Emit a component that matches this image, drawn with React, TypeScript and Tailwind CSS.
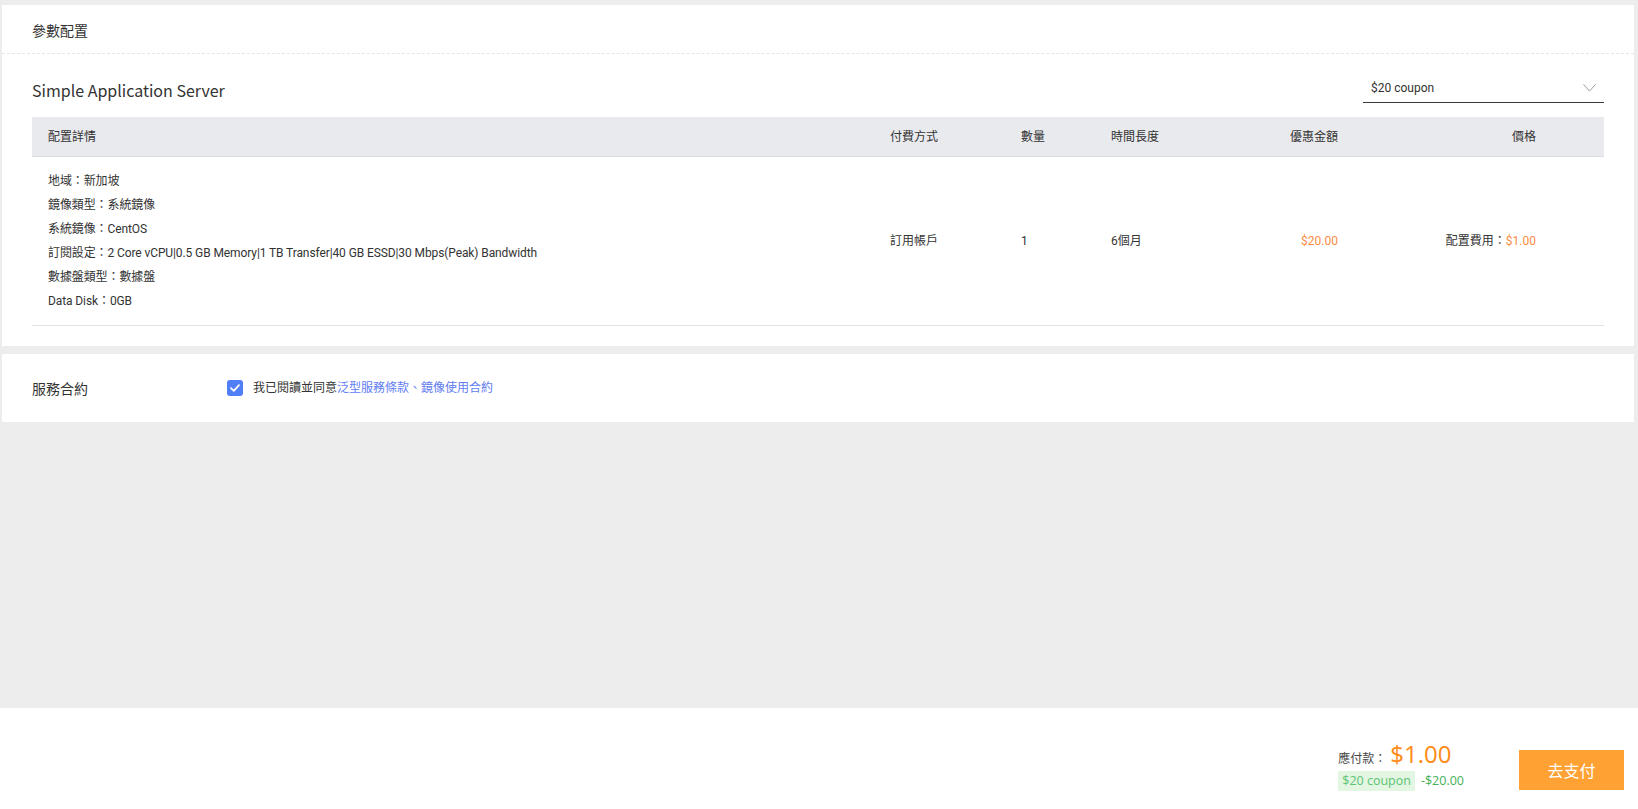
import React from 'react';

const cols = 'grid grid-cols-[858px_131px_90px_227px_198px_1fr]';

const details = [
  '地域：新加坡',
  '鏡像類型：系統鏡像',
  '系統鏡像：CentOS',
  '訂閱設定：2 Core vCPU|0.5 GB Memory|1 TB Transfer|40 GB ESSD|30 Mbps(Peak) Bandwidth',
  '數據盤類型：數據盤',
  'Data Disk：0GB',
];

export default function App() {
  return (
    <div className="h-screen flex flex-col bg-[#ededed] font-['Roboto','Noto_Sans_CJK_TC',sans-serif] text-[#333]">
      <div className="pt-[5px] pl-[2px] pr-[4px]">
        {/* 參數配置 */}
        <div className="bg-white pb-[20px]">
          <div className="h-[49px] pt-[3px] px-[30px] flex items-center border-b border-dashed border-[#e6e6e6] text-[14px] font-['Noto_Sans_CJK_TC',sans-serif]">
            參數配置
          </div>
          <div className="px-[30px]">
            <div className="flex items-center justify-between mt-[20px] mb-[14px] h-[29px]">
              <div className="pt-[3px] text-[16px] font-['Noto_Sans_CJK_TC',sans-serif] text-[#333]">
                Simple Application Server
              </div>
              <div className="w-[241px] h-[29px] flex items-center justify-between pl-[8px] pr-[8px] border-b border-[#3a3a3a] text-[12px]">
                <span>$20 coupon</span>
                <svg width="13" height="8" viewBox="0 0 13 8" fill="none">
                  <path d="M0.5 0.5 L6.5 7 L12.5 0.5" stroke="#999" strokeWidth="1" />
                </svg>
              </div>
            </div>

            <div className={`${cols} h-[40px] items-center bg-[#e9eaee] border-b border-[#dcdde1] text-[12px]`}>
              <div className="pl-4">配置詳情</div>
              <div>付費方式</div>
              <div>數量</div>
              <div className="flex justify-between">
                <span>時間長度</span>
                <span>優惠金額</span>
              </div>
              <div className="text-right">價格</div>
              <div />
            </div>

            <div className={`${cols} items-center py-[12px] border-b border-[#e3e3e6] text-[12px]`}>
              <div className="pl-4 leading-[24px] tracking-[-0.1px]">
                {details.map((d) => (
                  <div key={d}>{d}</div>
                ))}
              </div>
              <div>訂用帳戶</div>
              <div>1</div>
              <div className="flex justify-between">
                <span>6個月</span>
                <span className="text-[#fb8b45]">$20.00</span>
              </div>
              <div className="text-right">
                配置費用：<span className="text-[#fb8b45]">$1.00</span>
              </div>
              <div />
            </div>
          </div>
        </div>

        {/* 服務合約 */}
        <div className="bg-white mt-[8px] h-[68px] px-[30px] flex items-center">
          <div className="w-[195px] text-[14px] font-['Noto_Sans_CJK_TC',sans-serif]">服務合約</div>
          <span className="w-[16px] h-[16px] rounded-[3px] bg-[#4f7ef6] flex items-center justify-center">
            <svg width="10" height="8" viewBox="0 0 10 8" fill="none">
              <path d="M1 4.2 L3.8 6.8 L9 1.2" stroke="white" strokeWidth="1.8" strokeLinecap="round" strokeLinejoin="round" />
            </svg>
          </span>
          <span className="ml-[10px] text-[12px]">
            我已閱讀並同意<span className="text-[#5f7cf3]">泛型服務條款、鏡像使用合約</span>
          </span>
        </div>
      </div>

      <div className="flex-1" />

      {/* footer */}
      <div className="h-[101px] bg-white flex justify-end items-start pt-[29px] pr-[14px] font-['Open_Sans','Noto_Sans_CJK_TC',sans-serif]">
        <div className="flex flex-col">
          <div className="h-[34px] flex items-baseline">
            <span className="text-[12px] text-[#444]">應付款：</span>
            <span className="ml-[4px] text-[24px] leading-[34px] text-[#ff8a14]">$1.00</span>
          </div>
          <div className="flex items-center h-[20px] text-[12.5px]">
            <span className="bg-[#e2f6e2] text-[#5cc474] h-[20px] px-[4px] flex items-center">$20 coupon</span>
            <span className="ml-[6px] text-[#45b05a]">-$20.00</span>
          </div>
        </div>
        <button className="ml-[55px] mt-[13px] w-[105px] h-[40px] bg-[#ffa133] text-white text-[16px] font-['Noto_Sans_CJK_TC',sans-serif]">
          去支付
        </button>
      </div>
    </div>
  );
}
